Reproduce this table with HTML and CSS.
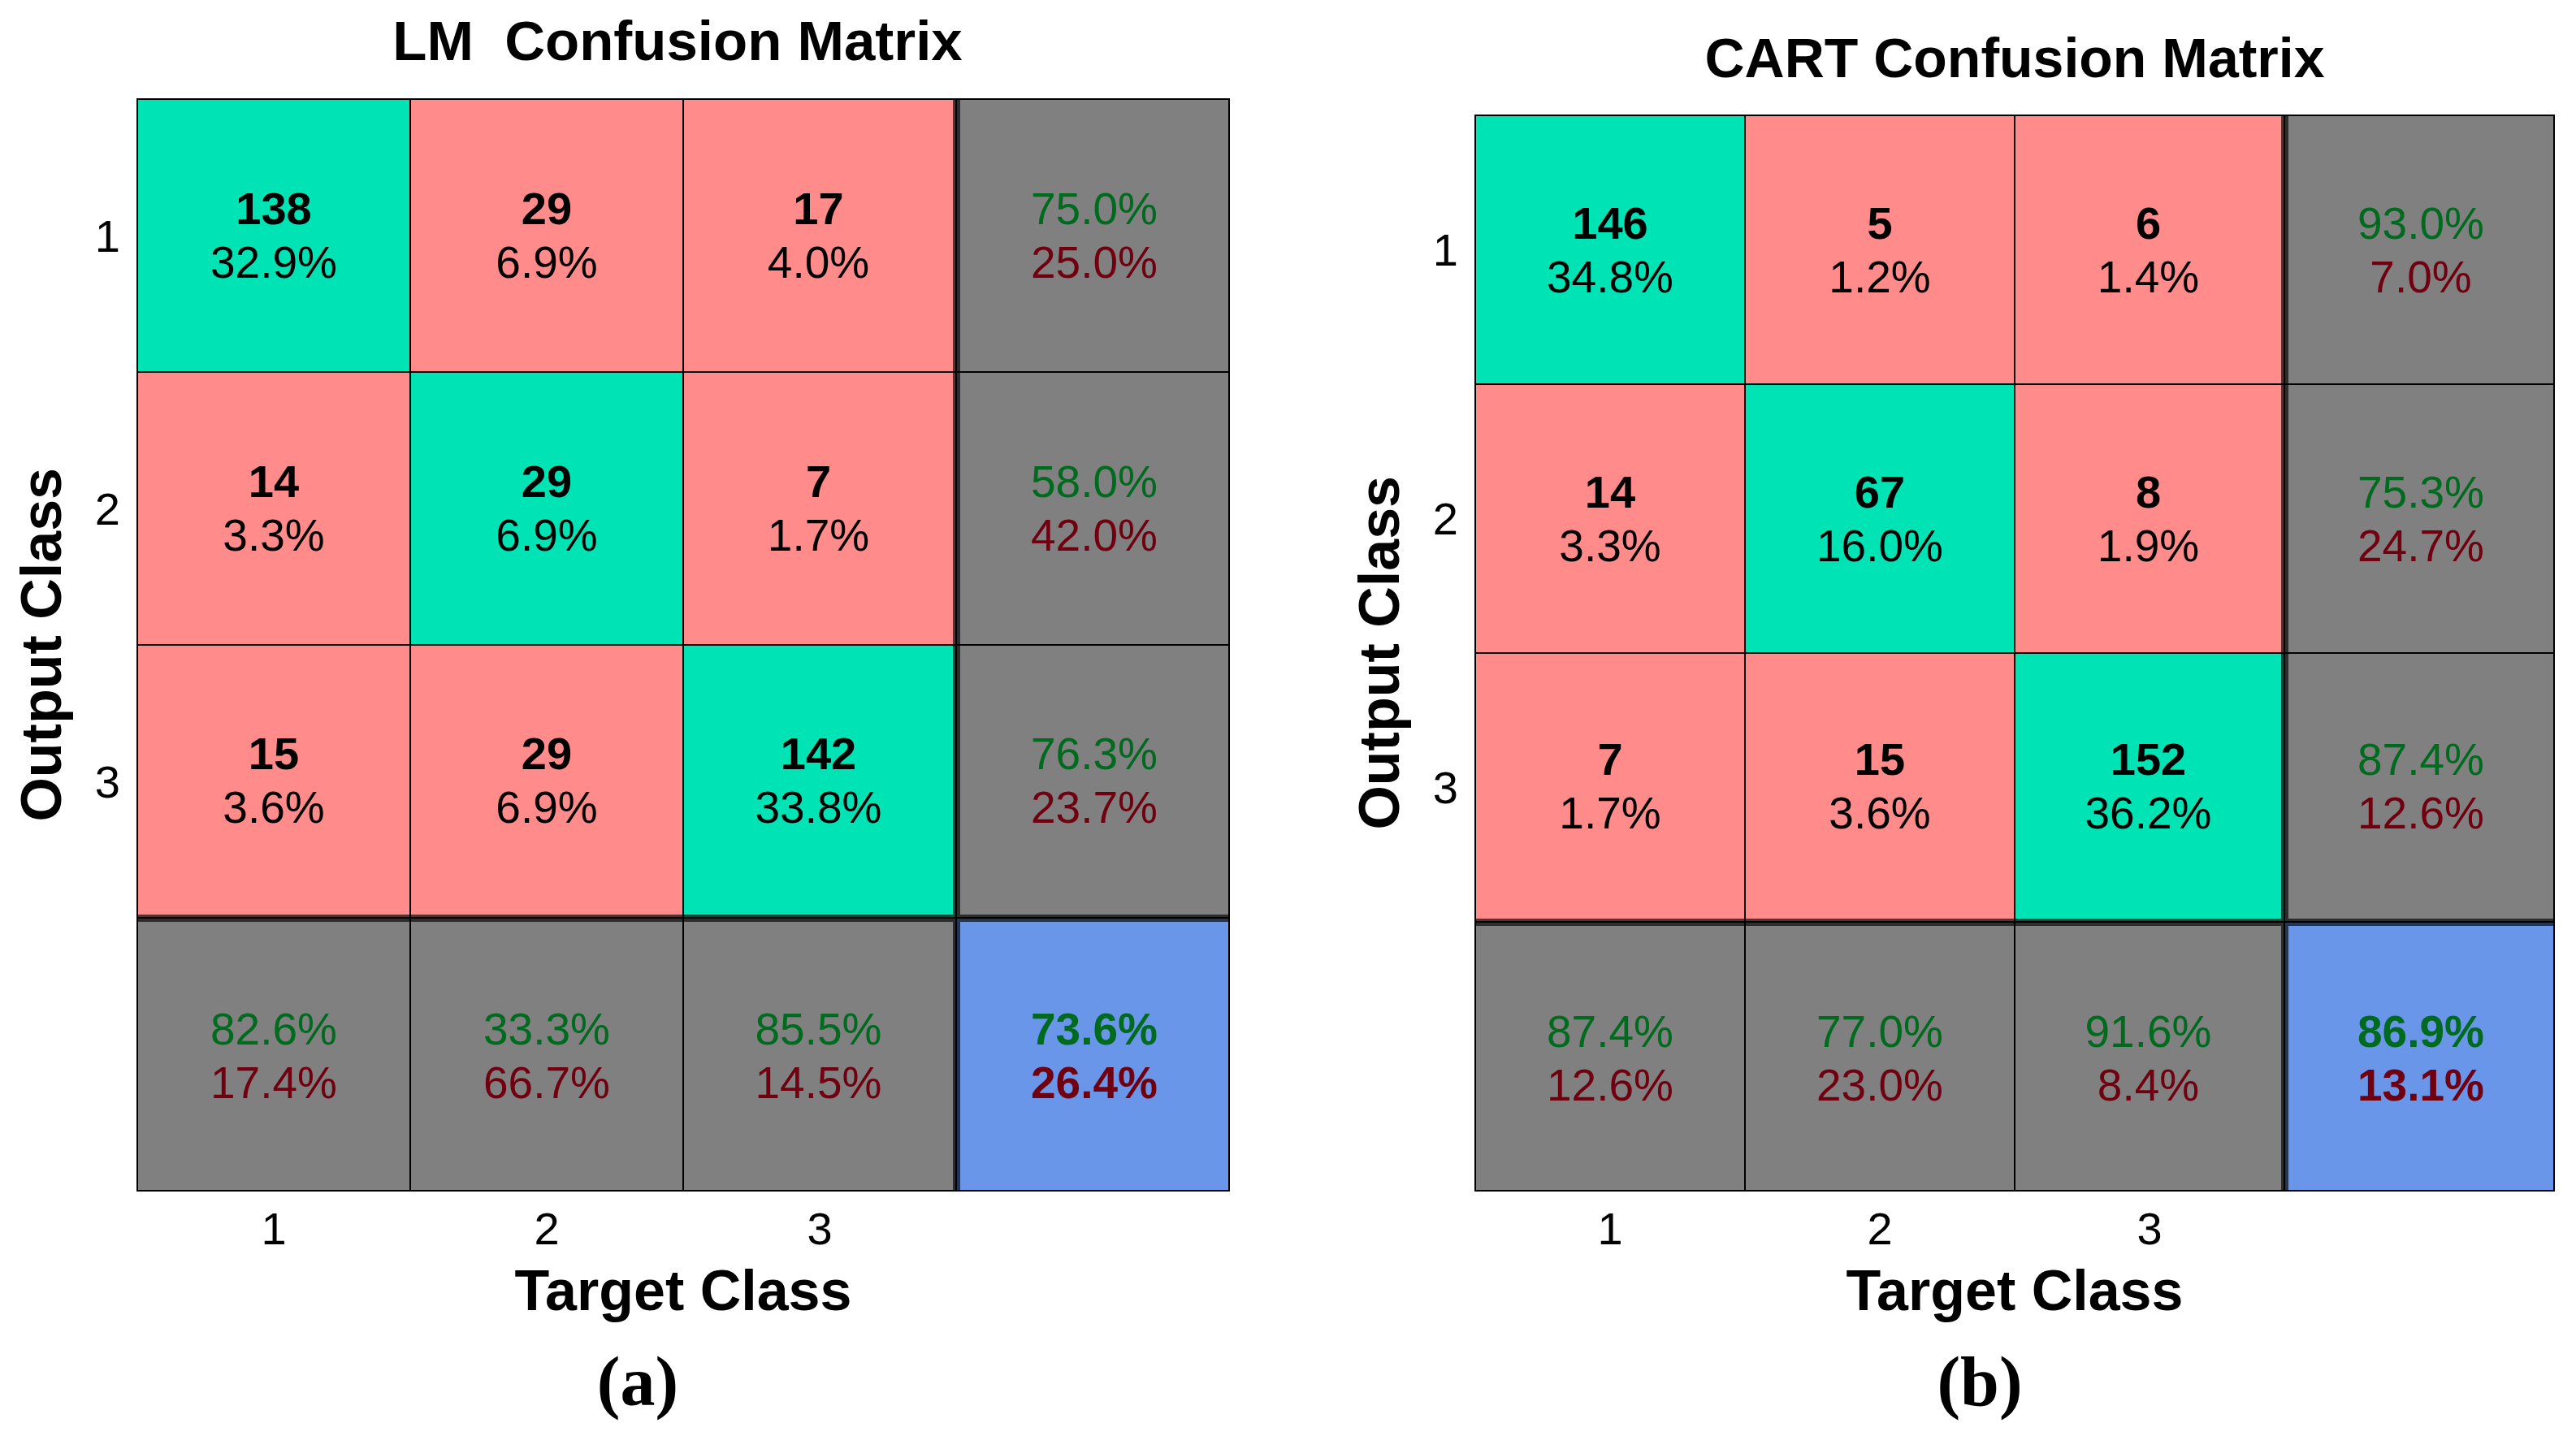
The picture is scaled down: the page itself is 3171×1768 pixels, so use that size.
FILE: index.html
```html
<!DOCTYPE html>
<html>
<head>
<meta charset="utf-8">
<title>Confusion Matrices</title>
<link rel="stylesheet" href="styles.css">
</head>
<body>
<div class="page">
  <figure class="fig fig-a">
    <div class="title">LM  Confusion Matrix</div>
    <div class="ylabel">Output Class</div>
    <div class="yticks"><span>1</span><span>2</span><span>3</span><span></span></div>
    <div class="matrix">
      <div class="cell ok c1 r1"><span class="n">138</span><span class="p">32.9%</span></div>
      <div class="cell bad c2 r1"><span class="n">29</span><span class="p">6.9%</span></div>
      <div class="cell bad c3 r1"><span class="n">17</span><span class="p">4.0%</span></div>
      <div class="cell sum c4 r1"><span class="p g">75.0%</span><span class="p r">25.0%</span></div>

      <div class="cell bad c1 r2"><span class="n">14</span><span class="p">3.3%</span></div>
      <div class="cell ok c2 r2"><span class="n">29</span><span class="p">6.9%</span></div>
      <div class="cell bad c3 r2"><span class="n">7</span><span class="p">1.7%</span></div>
      <div class="cell sum c4 r2"><span class="p g">58.0%</span><span class="p r">42.0%</span></div>

      <div class="cell bad c1 r3"><span class="n">15</span><span class="p">3.6%</span></div>
      <div class="cell bad c2 r3"><span class="n">29</span><span class="p">6.9%</span></div>
      <div class="cell ok c3 r3"><span class="n">142</span><span class="p">33.8%</span></div>
      <div class="cell sum c4 r3"><span class="p g">76.3%</span><span class="p r">23.7%</span></div>

      <div class="cell sum c1 r4"><span class="p g">82.6%</span><span class="p r">17.4%</span></div>
      <div class="cell sum c2 r4"><span class="p g">33.3%</span><span class="p r">66.7%</span></div>
      <div class="cell sum c3 r4"><span class="p g">85.5%</span><span class="p r">14.5%</span></div>
      <div class="cell tot c4 r4"><span class="p g b">73.6%</span><span class="p r b">26.4%</span></div>
    </div>
    <div class="xticks"><span>1</span><span>2</span><span>3</span><span></span></div>
    <div class="xlabel">Target Class</div>
    <figcaption class="caption">(a)</figcaption>
  </figure>

  <figure class="fig fig-b">
    <div class="title">CART Confusion Matrix</div>
    <div class="ylabel">Output Class</div>
    <div class="yticks"><span>1</span><span>2</span><span>3</span><span></span></div>
    <div class="matrix">
      <div class="cell ok c1 r1"><span class="n">146</span><span class="p">34.8%</span></div>
      <div class="cell bad c2 r1"><span class="n">5</span><span class="p">1.2%</span></div>
      <div class="cell bad c3 r1"><span class="n">6</span><span class="p">1.4%</span></div>
      <div class="cell sum c4 r1"><span class="p g">93.0%</span><span class="p r">7.0%</span></div>

      <div class="cell bad c1 r2"><span class="n">14</span><span class="p">3.3%</span></div>
      <div class="cell ok c2 r2"><span class="n">67</span><span class="p">16.0%</span></div>
      <div class="cell bad c3 r2"><span class="n">8</span><span class="p">1.9%</span></div>
      <div class="cell sum c4 r2"><span class="p g">75.3%</span><span class="p r">24.7%</span></div>

      <div class="cell bad c1 r3"><span class="n">7</span><span class="p">1.7%</span></div>
      <div class="cell bad c2 r3"><span class="n">15</span><span class="p">3.6%</span></div>
      <div class="cell ok c3 r3"><span class="n">152</span><span class="p">36.2%</span></div>
      <div class="cell sum c4 r3"><span class="p g">87.4%</span><span class="p r">12.6%</span></div>

      <div class="cell sum c1 r4"><span class="p g">87.4%</span><span class="p r">12.6%</span></div>
      <div class="cell sum c2 r4"><span class="p g">77.0%</span><span class="p r">23.0%</span></div>
      <div class="cell sum c3 r4"><span class="p g">91.6%</span><span class="p r">8.4%</span></div>
      <div class="cell tot c4 r4"><span class="p g b">86.9%</span><span class="p r b">13.1%</span></div>
    </div>
    <div class="xticks"><span>1</span><span>2</span><span>3</span><span></span></div>
    <div class="xlabel">Target Class</div>
    <figcaption class="caption">(b)</figcaption>
  </figure>
</div>
</body>
</html>
```

FILE: styles.css
```css
html, body {
  margin: 0;
  padding: 0;
  background: #ffffff;
}

.page {
  display: flex;
  align-items: flex-end;
  gap: 133px;
  font-family: "Liberation Sans", Arial, sans-serif;
  color: #000;
}

.fig {
  margin: 0;
  padding-top: 11px;
  display: grid;
  grid-template-columns: 12px 78px 78px auto;
  grid-template-rows: auto auto auto auto auto;
}

.fig-a {
  --cw: 334px;
  --ch: 334px;
}

.fig-b {
  --cw: 330px;
  --ch: 329px;
}

.title {
  grid-column: 4;
  grid-row: 1;
  height: 80px;
  margin-bottom: 30px;
  font-size: 70px;
  font-weight: bold;
  line-height: 80px;
  text-align: center;
  white-space: pre;
}

.fig-a .title {
  font-size: 69px;
  padding-right: 14px;
}

.fig-b .title {
  font-size: 68px;
}

.ylabel {
  grid-column: 2;
  grid-row: 2;
  align-self: center;
  writing-mode: vertical-rl;
  transform: rotate(180deg);
  font-size: 70px;
  font-weight: bold;
  line-height: 78px;
  white-space: nowrap;
}

.yticks {
  grid-column: 3;
  grid-row: 2;
  display: grid;
  grid-template-rows: repeat(4, var(--ch));
  row-gap: 2px;
  padding: 2px 20px 2px 0;
  font-size: 56px;
  text-align: right;
}

.yticks span {
  display: flex;
  align-items: center;
  justify-content: flex-end;
}

.matrix {
  grid-column: 4;
  grid-row: 2;
  display: grid;
  grid-template-columns: repeat(4, var(--cw));
  grid-template-rows: repeat(4, var(--ch));
  gap: 2px;
  padding: 2px;
  background: #000;
}

.cell {
  display: flex;
  flex-direction: column;
  align-items: center;
  justify-content: center;
}

.ok  { background: #00e3b4; }
.bad { background: #ff8b8b; }
.sum { background: #808080; }
.tot { background: #6996e8; }

.c3 { border-right: 3px solid rgba(0, 0, 0, 0.65); }
.c4 { border-left: 4px solid rgba(0, 0, 0, 0.65); }
.r3 { border-bottom: 3px solid rgba(0, 0, 0, 0.65); }
.r4 { border-top: 4px solid rgba(0, 0, 0, 0.65); }

.n {
  font-size: 56px;
  font-weight: bold;
  line-height: 66px;
}

.p {
  font-size: 55px;
  line-height: 66px;
}

.g { color: #006a1e; }
.r { color: #700010; }
.b { font-weight: bold; }

.xticks {
  grid-column: 4;
  grid-row: 3;
  display: grid;
  grid-template-columns: repeat(4, var(--cw));
  column-gap: 2px;
  padding: 0 2px;
  margin-top: 14px;
  font-size: 56px;
  line-height: 64px;
  text-align: center;
}

.xlabel {
  grid-column: 4;
  grid-row: 4;
  margin-top: 4px;
  font-size: 70px;
  font-weight: bold;
  line-height: 80px;
  text-align: center;
}

.caption {
  grid-column: 1 / -1;
  grid-row: 5;
  margin-top: 22px;
  font-family: "Liberation Serif", "Times New Roman", serif;
  font-size: 86px;
  font-weight: bold;
  line-height: 100px;
  text-align: center;
}

.fig-a .caption { padding-left: 56px; }
.fig-b .caption { padding-left: 82px; }
```
